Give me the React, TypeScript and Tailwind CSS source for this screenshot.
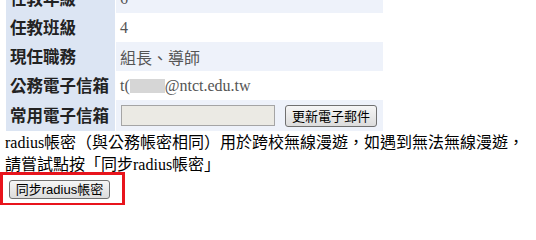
export default function App() {
  const labelCell =
    'w-[109px] shrink-0 bg-[#dce5f3] pl-[4px] flex items-center font-bold text-[16.5px] text-[#222] [font-family:"Noto_Sans_CJK_TC",sans-serif]';
  const valueCell =
    'flex-1 flex items-center pl-[4px] text-[16px] text-[#555] [font-family:"Liberation_Serif","Noto_Sans_CJK_TC",serif]';

  return (
    <div className="w-[536px] h-[205px] overflow-hidden bg-white relative">
      {/* info table, scrolled so the first row is cut */}
      <div className="ml-[6px] w-[377px] -mt-[16px] flex flex-col">
        <div className="flex h-[29px] gap-[1px]">
          <div className={labelCell}>任教年級</div>
          <div className={`${valueCell} bg-[#eef2fa]`}>6</div>
        </div>
        <div className="flex h-[29px] gap-[1px]">
          <div className={labelCell}>任教班級</div>
          <div className={`${valueCell} bg-white`}>4</div>
        </div>
        <div className="flex h-[29px] gap-[1px]">
          <div className={labelCell}>現任職務</div>
          <div className={`${valueCell} bg-[#eef2fa] [font-family:"Noto_Sans_CJK_TC",sans-serif] text-[15.5px]`}>組長、導師</div>
        </div>
        <div className="flex h-[29px] gap-[1px]">
          <div className={labelCell}>公務電子信箱</div>
          <div className={`${valueCell} bg-white`}>
            <span>t(</span>
            <span className="inline-block w-[35px] h-[14px] bg-[#d6d6d6]" />
            <span>@ntct.edu.tw</span>
          </div>
        </div>
        <div className="flex h-[31px] gap-[1px]">
          <div className={labelCell}>常用電子信箱</div>
          <div className={`${valueCell} bg-[#eef2fa] gap-[10px] pl-[5px]`}>
            <input
              disabled
              className="w-[154px] h-[21px] bg-[#ebeae4] border border-[#a5a5a5]"
            />
            <button className="h-[22px] px-[6px] rounded-[3px] border border-[#707070] bg-gradient-to-b from-[#f6f6f6] to-[#dcdcdc] text-[13px] text-black leading-none [font-family:'Noto_Sans_CJK_TC',sans-serif]">
              更新電子郵件
            </button>
          </div>
        </div>
      </div>

      <p className="ml-[5px] mt-[1px] -mb-[4px] text-[16px] leading-[22px] text-black [font-family:'Liberation_Serif','Noto_Sans_CJK_TC',serif]">
        radius帳密（與公務帳密相同）用於跨校無線漫遊，如遇到無法無線漫遊，
        <br />
        請嘗試點按「同步radius帳密」
      </p>

      <div className="relative w-[125px] h-[34px] border-[3px] border-[#e8141c] flex items-center pl-[6px]">
        <button className="h-[19px] w-[101px] rounded-[3px] border border-[#707070] bg-gradient-to-b from-[#f6f6f6] to-[#dcdcdc] text-[13px] text-black leading-none [font-family:'Liberation_Sans','Noto_Sans_CJK_TC',sans-serif]">
          同步radius帳密
        </button>
      </div>
    </div>
  );
}
